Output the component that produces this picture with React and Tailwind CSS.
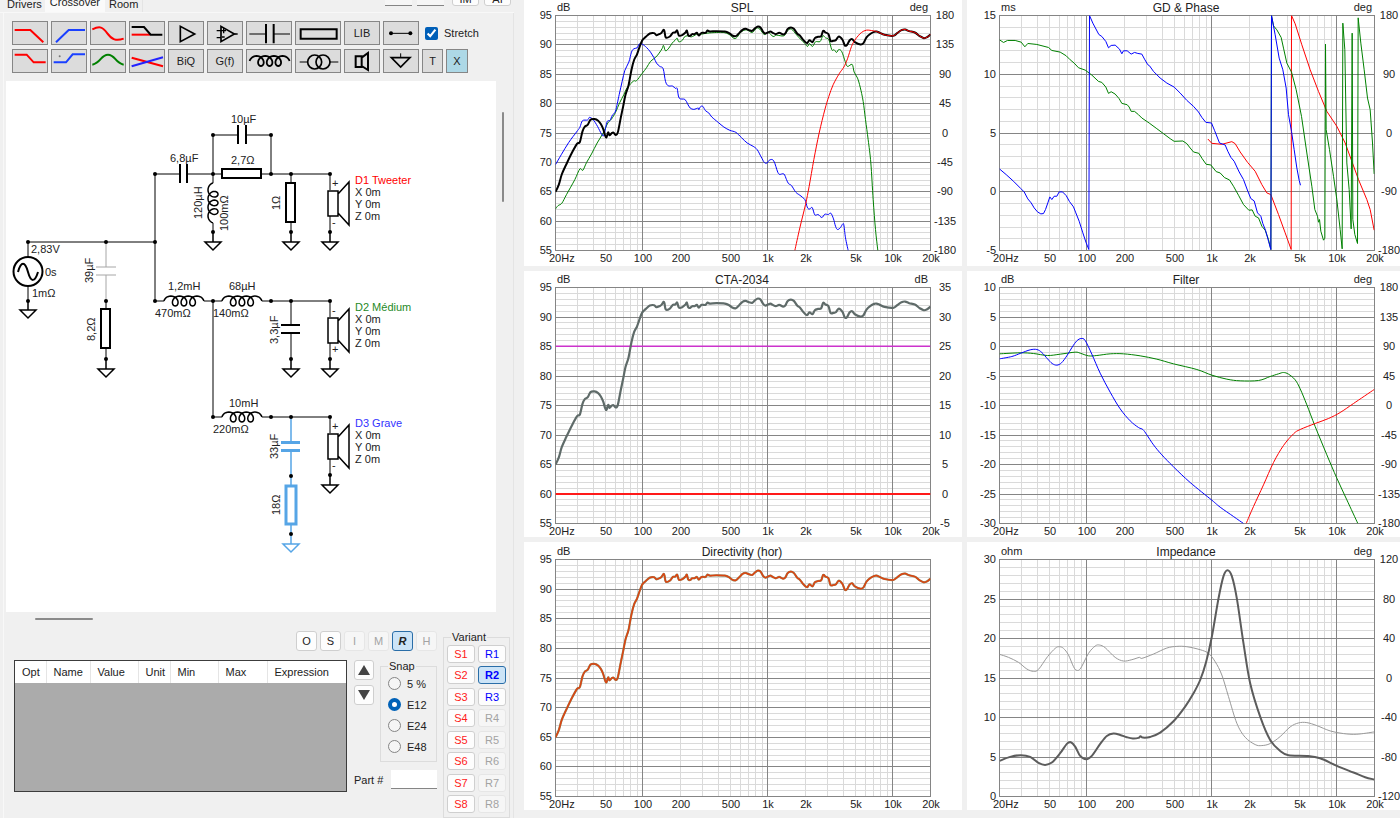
import clsx from 'clsx';

const RED = '#ff0000';
const BLUE = '#0000ff';
const GREEN = '#008000';
const SELECTED = '#56a5e6';

// ---------- curves ----------

const SUM = [
  107,577, 117,555, 126,524, 140,493, 157,458, 172,432, 180,427, 188,395, 195,381, 204,375, 212,360, 224,358,
  235,363, 243,373, 250,388, 256,408, 260,413, 265,398, 269,407, 275,401, 281,399, 288,406, 294,398, 303,353,
  310,320, 317,285, 326,257, 335,210, 343,180, 351,165, 358,145, 367,122, 378,111, 390,101, 403,100, 410,106,
  420,102, 425,99, 431,90, 434,95, 438,113, 450,110, 459,99, 466,98, 472,92, 477,107, 487,106, 497,98,
  501,92, 505,106, 511,108, 517,103, 524,103, 531,99, 537,107, 545,99, 557,99, 563,92, 570,95, 590,94,
  615,95, 628,100, 637,107, 648,109, 658,100, 668,90, 677,87, 688,91, 697,93, 706,85, 714,80, 722,83,
  730,96, 737,101, 744,98, 752,95, 759,99, 768,103, 778,99, 790,104, 797,100, 803,88, 813,83, 822,87,
  832,101, 840,107, 850,120, 858,128, 863,129, 869,121, 878,127, 885,115, 895,111, 904,109, 910,93, 917,98,
  926,103, 932,123, 941,123, 948,121, 957,110, 968,120, 975,137, 982,135, 989,122, 997,118, 1005,127,
  1022,134, 1031,130, 1040,113, 1052,102, 1063,96, 1070,95, 1080,99, 1094,105, 1120,108, 1132,100,
  1145,91, 1156,89, 1168,94, 1185,98, 1200,109, 1212,115, 1222,112, 1232,104,
];

const SPL_WOOFER = [
  107,495, 125,464, 147,428, 170,397, 180,383, 188,363, 203,361, 209,353, 220,360, 233,380, 245,403, 252,407,
  262,366, 270,363, 278,346, 287,334, 298,285, 307,245, 315,212, 327,187, 335,157, 342,147, 352,144, 358,133,
  367,133, 380,143, 392,157, 402,173, 410,190, 420,200, 430,207, 437,245, 445,258, 458,259, 467,266, 472,266,
  478,295, 495,299, 503,312, 511,325, 522,329, 535,325, 537,330, 542,321, 549,320, 557,333, 567,340, 576,352,
  595,368, 612,382, 630,392, 648,398, 665,414, 682,430, 700,440, 712,450, 724,472, 734,489, 742,490, 748,482,
  758,480, 765,491, 771,510, 778,524, 792,523, 800,540, 806,552, 815,558, 828,578, 840,587, 855,600, 862,622,
  868,629, 877,624, 885,646, 895,645, 906,654, 915,644, 925,645, 933,641, 941,658, 947,680, 953,690, 962,684,
  968,674, 972,676, 977,715, 985,753,
];

const SPL_MID = [
  107,628, 115,618, 126,611, 140,585, 165,540, 180,508, 189,512, 200,489, 215,463, 232,430, 250,400, 264,370,
  275,358, 287,338, 300,308, 312,285, 322,264, 341,244, 350,243, 367,221, 380,204, 392,185, 408,172, 418,160,
  427,146, 431,137, 437,153, 447,145, 457,130, 467,120, 472,115, 477,126, 488,121, 494,111, 503,108, 515,111,
  530,104, 545,103, 562,100, 590,98, 612,98, 628,104, 643,116, 652,112, 663,97, 680,90, 697,98, 710,85,
  720,88, 733,104, 745,98, 760,110, 770,106, 792,108, 803,93, 815,88, 830,105, 843,119, 855,131, 863,140,
  869,131, 878,140, 887,126, 901,125, 909,108, 917,114, 927,120, 936,150, 943,150, 950,158, 957,149, 966,156,
  976,185, 983,200, 997,194, 1003,217, 1013,235, 1021,262, 1030,305, 1037,360, 1045,420, 1053,490, 1060,600,
  1067,690, 1074,753,
];

const SPL_TWEETER = [
  825,753, 840,685, 857,615, 868,560, 882,480, 898,400, 915,330, 927,290, 940,255, 958,222, 972,202, 983,177,
  995,140, 1005,121, 1015,108, 1025,98, 1040,91, 1060,93, 1070,95, 1080,99, 1094,105, 1120,108, 1132,100,
  1145,91, 1156,89, 1168,94, 1185,98, 1200,109, 1212,115, 1222,112, 1232,104,
];

const PHASE_WOOFER = [
  118,508, 138,525, 160,545, 182,567, 192,577, 203,598, 213,610, 222,625, 232,637, 242,643, 250,642, 256,630,
  263,610, 269,592, 275,600, 282,590, 290,590, 297,577, 307,577, 318,588, 328,606, 340,622, 347,640, 357,665,
  368,700, 378,730, 386,750, 388,47, 398,70, 416,104, 425,110, 437,125, 445,144, 453,137, 465,136, 478,148,
  485,162, 490,153, 501,153, 513,163, 523,158, 533,161, 545,163, 553,178, 563,195, 568,198, 580,215, 600,235,
  620,250, 642,262, 660,280, 680,302, 700,320, 715,337, 725,353, 737,368, 754,370, 763,392, 778,430, 795,436,
  803,455, 812,473, 822,485, 837,517, 850,540, 863,575, 872,597, 882,604, 892,640, 902,650, 908,672, 916,692,
  925,725, 932,750, 934,47, 945,105, 957,175, 968,210, 978,265, 985,345, 994,395, 1002,450, 1010,505,
  1017,542, 1021,557,
];

const PHASE_MID = [
  118,120, 130,128, 142,122, 165,122, 183,127, 194,141, 203,131, 230,134, 265,143, 275,152, 300,157, 318,168,
  330,180, 342,190, 355,204, 375,211, 395,226, 415,245, 425,248, 437,262, 445,281, 453,276, 465,283, 477,297,
  485,311, 501,315, 507,322, 513,335, 523,335, 535,345, 545,355, 567,370, 590,387, 610,402, 630,417, 642,425,
  668,424, 680,432, 690,445, 700,457, 716,461, 726,477, 738,494, 752,496, 768,516, 780,520, 793,534, 808,541,
  820,560, 835,587, 850,615, 866,632, 876,631, 885,650, 895,655, 905,680, 915,692, 925,720, 932,750, 934,47,
  940,78, 950,90, 963,113, 970,145, 980,190, 994,217, 1008,270, 1024,350, 1040,460, 1055,560, 1064,630,
  1072,650, 1075,668, 1078,660, 1082,695, 1090,722, 1094,716, 1096,133, 1098,390, 1108,450, 1120,530,
  1130,600, 1140,690, 1146,748, 1148,70, 1154,150, 1160,490, 1167,570, 1173,688, 1176,100, 1178,660,
  1184,705, 1192,732, 1194,54, 1202,130, 1212,210, 1222,295, 1230,330, 1237,430, 1242,523,
];

const PHASE_TWEETER = [
  743,418, 755,431, 785,434, 815,426, 825,432, 840,457, 862,488, 885,515, 905,555, 920,580, 932,585, 955,645,
  975,700, 993,750, 994,47, 1005,72, 1025,135, 1050,210, 1075,275, 1100,335, 1130,380, 1155,430, 1175,485,
  1195,540, 1220,600, 1230,630, 1242,692,
];

const FILTER_WOOFER = [
  118,272, 155,265, 182,255, 210,245, 230,244, 245,253, 262,272, 276,286, 290,291, 304,284, 320,263, 336,237,
  350,218, 363,211, 375,217, 395,258, 420,315, 450,372, 480,422, 510,458, 535,478, 548,484, 560,500, 580,530,
  605,560, 640,596, 690,643, 755,696, 780,717, 820,745, 850,766,
];
const FILTER_MID = [
  118,257, 180,254, 220,256, 262,262, 300,258, 345,252, 360,255, 385,263, 410,262, 450,257, 490,257, 540,263,
  590,273, 640,287, 710,304, 755,321, 800,333, 840,338, 895,337, 930,325, 955,317, 970,313, 985,318, 1005,335,
  1020,362, 1040,410, 1065,475, 1100,560, 1130,630, 1160,695, 1193,766,
];
const FILTER_TWEETER = [
  858,766, 880,715, 910,650, 940,583, 970,532, 1000,497, 1020,484, 1065,466, 1105,451, 1140,433, 1180,406,
  1242,364,
];

const IMP_MAG = [
  118,663, 150,651, 182,646, 210,651, 235,669, 255,675, 275,668, 300,640, 320,612, 332,607, 345,620, 360,648,
  378,658, 395,648, 420,612, 440,588, 460,581, 480,585, 500,592, 518,596, 535,594, 541,589, 548,593, 570,591,
  600,578, 640,544, 675,500, 700,460, 720,420, 738,365, 755,290, 775,175, 790,108, 802,90, 815,108, 830,175,
  850,310, 870,430, 900,530, 930,600, 960,633, 985,646, 1040,648, 1080,655, 1130,678, 1180,698, 1215,712,
  1242,719,
];
const IMP_PHASE = [
  118,343, 145,352, 175,367, 200,387, 220,394, 235,388, 262,350, 285,325, 297,320, 310,325, 325,345, 340,380,
  350,391, 362,384, 385,340, 405,318, 418,315, 435,323, 465,352, 490,363, 515,359, 538,352, 545,355, 580,342,
  620,324, 650,319, 680,320, 720,329, 745,340, 765,365, 785,405, 805,470, 830,550, 855,592, 885,614, 905,617,
  930,611, 960,590, 990,561, 1015,549, 1040,548, 1070,557, 1110,573, 1150,581, 1190,583, 1242,576,
];

function toPoints(flat) {
  const pts = [];
  for (let i = 0; i < flat.length; i += 2) pts.push([flat[i], flat[i + 1]]);
  return pts;
}

function linePath(flat) {
  return 'M' + toPoints(flat).map(p => p.join(' ')).join('L');
}

// Catmull-Rom through all points
function smoothPath(flat) {
  const p = toPoints(flat);
  let d = `M${p[0][0]} ${p[0][1]}`;
  for (let i = 0; i < p.length - 1; i++) {
    const a = p[i - 1] || p[i];
    const b = p[i];
    const c = p[i + 1];
    const e = p[i + 2] || c;
    d += `C${b[0] + (c[0] - a[0]) / 6} ${b[1] + (c[1] - a[1]) / 6} ${c[0] - (e[0] - b[0]) / 6} ${c[1] - (e[1] - b[1]) / 6} ${c[0]} ${c[1]}`;
  }
  return d;
}

// ---------- charts ----------

const PLOT_W = 375;
const FREQ_LABELS = [
  [50, '50'], [100, '100'], [200, '200'], [500, '500'], [1000, '1k'],
  [2000, '2k'], [5000, '5k'], [10000, '10k'], [20000, '20k'],
];
const FREQ_LINES = [];
for (let decade = 10; decade <= 10000; decade *= 10) {
  for (let n = 1; n < 10; n++) {
    const f = n * decade;
    if (f > 20 && f < 20000) FREQ_LINES.push(f);
  }
}

function range(from, to, step) {
  const out = [];
  for (let v = from; step > 0 ? v <= to : v >= to; v += step) out.push(v);
  return out;
}

const DB_AXIS = range(95, 55, -5);
const DEG_AXIS = range(180, -180, -45);

const CHARTS = [
  {
    title: 'SPL', width: 438, height: 266, x0: 31, top: 15, bottom: 250,
    left: 'dB', right: 'deg', leftTicks: DB_AXIS, rightTicks: DEG_AXIS, box: '107 47 1125 706',
    series: [
      { d: smoothPath(SPL_MID), color: GREEN, w: 1 },
      { d: smoothPath(SPL_WOOFER), color: BLUE, w: 1 },
      { d: smoothPath(SUM), color: '#000000', w: 2 },
      { d: smoothPath(SPL_TWEETER), color: RED, w: 1 },
    ],
  },
  {
    title: 'GD & Phase', width: 433, height: 266, x0: 32, top: 15, bottom: 250,
    left: 'ms', right: 'deg', leftTicks: range(15, -5, -5), rightTicks: range(180, -180, -90), box: '118 47 1125 706',
    series: [
      { d: linePath(PHASE_TWEETER), color: RED, w: 1 },
      { d: linePath(PHASE_MID), color: GREEN, w: 1 },
      { d: linePath(PHASE_WOOFER), color: BLUE, w: 1 },
    ],
  },
  {
    title: 'CTA-2034', width: 438, height: 266, x0: 31, top: 16, bottom: 252,
    left: 'dB', right: 'dB', leftTicks: DB_AXIS, rightTicks: range(35, -5, -5), box: '107 47 1125 706',
    series: [
      { d: 'M107 223H1232', color: '#cc33cc', w: 1.5 },
      { d: 'M107 665H1232', color: '#ff1a1a', w: 2 },
      { d: smoothPath(SUM), color: '#5f6b69', w: 2.2 },
    ],
  },
  {
    title: 'Filter', width: 433, height: 266, x0: 32, top: 16, bottom: 252,
    left: 'dB', right: 'deg', leftTicks: range(10, -30, -5), rightTicks: DEG_AXIS, box: '118 58 1125 708',
    series: [
      { d: smoothPath(FILTER_MID), color: GREEN, w: 1 },
      { d: smoothPath(FILTER_WOOFER), color: BLUE, w: 1 },
      { d: smoothPath(FILTER_TWEETER), color: RED, w: 1 },
    ],
  },
  {
    title: 'Directivity (hor)', width: 438, height: 268, x0: 31, top: 17, bottom: 254,
    left: 'dB', right: '', leftTicks: DB_AXIS, rightTicks: [], box: '107 47 1125 706',
    series: [
      { d: smoothPath(SUM), color: '#8d8a60', w: 2.2 },
      { d: smoothPath(SUM), color: '#dd4412', w: 1.5 },
    ],
  },
  {
    title: 'Impedance', width: 433, height: 268, x0: 32, top: 17, bottom: 254,
    left: 'ohm', right: 'deg', leftTicks: range(30, 0, -5), rightTicks: range(120, -120, -40), box: '118 58 1125 712',
    series: [
      { d: smoothPath(IMP_PHASE), color: '#999999', w: 1 },
      { d: smoothPath(IMP_MAG), color: '#5c5c5c', w: 2 },
    ],
  },
];

function Chart({ chart }) {
  const { title, width, height, x0, top, bottom, left, right, leftTicks, rightTicks, box, series } = chart;
  const plotH = bottom - top;
  const fx = f => x0 + Math.round((PLOT_W * Math.log10(f / 20)) / 3);
  const rowY = (i, n) => top + Math.round((plotH * i) / n);
  const majors = leftTicks.length - 1;
  const minors = majors * 5;

  return (
    <svg viewBox={`0 0 ${width} ${height}`} className="block h-auto w-full bg-white" role="img" aria-label={title}>
      <g stroke="#dadada" shapeRendering="crispEdges">
        {FREQ_LINES.map(f => <line key={f} x1={fx(f) + 0.5} x2={fx(f) + 0.5} y1={top} y2={bottom} />)}
        {range(1, minors - 1, 1).map(i => (
          <line key={i} x1={x0} x2={x0 + PLOT_W} y1={rowY(i, minors) + 0.5} y2={rowY(i, minors) + 0.5} />
        ))}
      </g>
      <g stroke="#858585" shapeRendering="crispEdges">
        {[100, 1000, 10000].map(f => <line key={f} x1={fx(f) + 0.5} x2={fx(f) + 0.5} y1={top} y2={bottom} />)}
        {range(1, majors - 1, 1).map(i => (
          <line key={i} x1={x0} x2={x0 + PLOT_W} y1={rowY(i, majors) + 0.5} y2={rowY(i, majors) + 0.5} />
        ))}
        <rect x={x0 + 0.5} y={top + 0.5} width={PLOT_W} height={plotH} fill="none" />
      </g>

      <svg x={x0 + 0.5} y={top + 0.5} width={PLOT_W} height={plotH} viewBox={box} preserveAspectRatio="none">
        {series.map((s, i) => (
          <path key={i} d={s.d} fill="none" stroke={s.color} strokeWidth={s.w} strokeLinejoin="round" vectorEffect="non-scaling-stroke" />
        ))}
      </svg>

      <g className="text-[11px]" fill="#222222">
        <text x={x0 + 2} y={top - 4}>{left}</text>
        {right && <text x={x0 + 373} y={top - 4} textAnchor="end">{right}</text>}
        {leftTicks.map((v, i) => (
          <text key={v} x={x0 - 3} y={rowY(i, majors) + 4} textAnchor="end">{v}</text>
        ))}
        {rightTicks.map((v, i) => (
          <text key={v} x={x0 + PLOT_W + 15} y={rowY(i, rightTicks.length - 1) + 4} textAnchor="middle">{v}</text>
        ))}
        <text x={x0 - 6} y={bottom + 12}>20Hz</text>
        {FREQ_LABELS.map(([f, label]) => (
          <text key={f} x={fx(f) + 1} y={bottom + 12} textAnchor="middle">{label}</text>
        ))}
      </g>
      <text x={x0 + 187} y={top - 3} textAnchor="middle" fill="#222222" className="text-[12px]">
        {title}
      </text>
    </svg>
  );
}

// ---------- schematic ----------

// 40 wide coil with three loops, drawn from (0,0)
function coilPath() {
  const pts = [];
  for (let i = 0; i <= 84; i++) {
    const a = -Math.PI / 2 + (i / 84) * 7 * Math.PI;
    pts.push(`${(6.9 + 1.38 * a + 4.8 * Math.sin(a)).toFixed(2)} ${(-5 * Math.cos(a)).toFixed(2)}`);
  }
  return 'M' + pts.join('L');
}
const COIL = coilPath();

const Dot = ({ x, y }) => <circle cx={x} cy={y} r="2" fill="#000000" stroke="none" />;

const Ground = ({ x, y, color = '#000000' }) => (
  <path d={`M${x} ${y - 10}V${y}M${x - 8} ${y}H${x + 8}L${x} ${y + 8}Z`} stroke={color} strokeWidth="1.5" />
);

const Label = ({ x, y, children, up }) => (
  <text x={x} y={y} transform={up ? `rotate(-90 ${x} ${y})` : undefined} fill="#222222" stroke="none">{children}</text>
);

function Driver({ y, name, color, inverted }) {
  return (
    <g>
      <path d={`M330 ${y}V${y + 16}M330 ${y + 42}V${y + 58}`} />
      <path d={`M328 ${y + 17}H338V${y + 42}H328ZM338 ${y + 20}L349 ${y + 8}V${y + 51}L338 ${y + 39}`} strokeWidth="1.5" />
      <Label x={332} y={y + 13}>{inverted ? '-' : '+'}</Label>
      <Label x={332} y={y + 52}>{inverted ? '+' : '-'}</Label>
      <Dot x={330} y={y} />
      <Dot x={330} y={y + 58} />
      <Ground x={330} y={y + 68} />
      <text x="355" y={y + 10} fill={color} stroke="none">{name}</text>
      {['X', 'Y', 'Z'].map((axis, i) => (
        <Label key={axis} x={355} y={y + 22 + i * 12}>{axis} 0m</Label>
      ))}
    </g>
  );
}

const DOTS = [
  [28, 242], [106, 242], [155, 242], [28, 301], [106, 301], [106, 359], [155, 174], [155, 301], [213, 174],
  [213, 135], [271, 135], [271, 174], [291, 174], [213, 232], [291, 232], [213, 301], [271, 301], [291, 301],
  [291, 359], [213, 417], [271, 417], [291, 417], [291, 476], [291, 534],
];

function Schematic() {
  return (
    <svg
      width="490" height="531" viewBox="6 81 490 531" fill="none" stroke="#000000"
      className="block text-[11px]" role="img" aria-label="Crossover schematic"
    >
      {/* wires */}
      <path d="M28 242H155M28 242V257M28 286V301M155 174V301M155 174H179M188 174H222M213 183V135H237M246 135H271V174M262 174H330M291 174V183M291 223V232M213 223V232M155 301H164M204 301H222M262 301H330M213 301V417H222M262 417H330M291 301V325M291 333V359M106 301V309M106 349V359" />

      {/* source */}
      <circle cx="28" cy="271.500" r="14.500" strokeWidth="2" />
      <path d="M18 272C21 261 25 261 28 272S35 282 38 272" strokeWidth="2" />
      <Ground x={28} y={310} />
      <Label x={31} y={253}>2,83V</Label>
      <Label x={45} y={276}>0s</Label>
      <Label x={32} y={297}>1mΩ</Label>

      {/* muted branch */}
      <path d="M106 242V267M106 275V301M96 267H116M96 275H116" stroke="#a6a6a6" />
      <path d="M101 309H110V348H101Z" strokeWidth="2" />
      <Ground x={106} y={369} />
      <Label up x={93} y={283}>39µF</Label>
      <Label up x={95} y={341}>8,2Ω</Label>

      {/* tweeter */}
      <path d="M180 164V183M187 164V183M238 125V144M246 125V144" strokeWidth="2" />
      <path d="M222 169H261V178H222ZM286 183H295V222H286Z" strokeWidth="2" />
      <path d={COIL} transform="translate(213 183) rotate(90) scale(1 -1)" strokeWidth="1.5" />
      <Ground x={213} y={242} />
      <Ground x={291} y={242} />
      <Label x={170} y={162}>6,8µF</Label>
      <Label x={231} y={123}>10µF</Label>
      <Label x={231} y={164}>2,7Ω</Label>
      <Label up x={202} y={219}>120µH</Label>
      <Label up x={228} y={231}>100mΩ</Label>
      <Label up x={280} y={210}>1Ω</Label>
      <Driver y={174} name="D1 Tweeter" color={RED} />

      {/* mid */}
      <path d={COIL} transform="translate(164 301)" strokeWidth="1.5" />
      <path d={COIL} transform="translate(222 301)" strokeWidth="1.5" />
      <path d="M281 325H300M281 333H300" strokeWidth="2" />
      <Ground x={291} y={369} />
      <Label x={168} y={290}>1,2mH</Label>
      <Label x={155} y={317}>470mΩ</Label>
      <Label x={229} y={290}>68µH</Label>
      <Label x={213} y={317}>140mΩ</Label>
      <Label up x={278} y={344}>3,3µF</Label>
      <Driver y={301} name="D2 Médium" color="#1f8a1f" inverted />

      {/* woofer, selected branch in light blue */}
      <path d={COIL} transform="translate(222 417)" strokeWidth="1.5" />
      <g stroke={SELECTED}>
        <path d="M291 417V442M291 451V485M291 525V534" strokeWidth="1.500" />
        <path d="M281 442.500H300M281 450.500H300M286 486H296V524H286Z" strokeWidth="3" />
      </g>
      <Ground x={291} y={544} color={SELECTED} />
      <Label x={229} y={407}>10mH</Label>
      <Label x={213} y={433}>220mΩ</Label>
      <Label up x={278} y={459}>33µF</Label>
      <Label up x={280} y={515}>18Ω</Label>
      <Driver y={417} name="D3 Grave" color="#3333ff" />

      {DOTS.map(([x, y]) => <Dot key={`${x}-${y}`} x={x} y={y} />)}
    </svg>
  );
}

// ---------- toolbar ----------

const WIDE = 'w-[46px]';
const NORMAL = 'w-9';

const TOOLS_TOP = [
  { name: 'Low pass', size: NORMAL, box: '39 67 102 66', icon: <path d="M44 91H91L130 128" stroke={RED} strokeWidth="6" /> },
  { name: 'High pass', size: NORMAL, box: '156 67 102 66', icon: <path d="M168 128L206 91H255" stroke="#1a40ff" strokeWidth="6" /> },
  { name: 'All pass', size: NORMAL, box: '273 67 102 66', icon: <path d="M277 89C300 78 308 82 322 101S348 125 371 117" stroke={RED} strokeWidth="6" /> },
  {
    name: 'Shelf', size: NORMAL, box: '390 67 102 66',
    icon: (
      <>
        <path d="M395 105H450" stroke={RED} strokeWidth="6" />
        <path d="M395 82H432L452 105H487" strokeWidth="6" />
      </>
    ),
  },
  { name: 'Amplifier', size: NORMAL, box: '507 67 102 66', icon: <path d="M541 80V126L584 103Z" strokeWidth="5" /> },
  {
    name: 'Op amp', size: NORMAL, box: '624 67 102 66',
    icon: (
      <>
        <path d="M663 80V126L703 103Z" strokeWidth="5" />
        <path d="M650 93H678M650 114H663M671 85V101M666 112H674M703 103H713" strokeWidth="4" />
      </>
    ),
  },
  {
    name: 'Capacitor', size: WIDE, box: '741 67 132 66',
    icon: (
      <>
        <path d="M748 103H797M822 103H870" strokeWidth="3" />
        <path d="M798 73V131M821 73V131" strokeWidth="6" />
      </>
    ),
  },
  { name: 'Resistor', size: WIDE, box: '889 67 132 66', icon: <path d="M903 89H1011V117H903Z" strokeWidth="6" /> },
  { name: 'LIB', size: NORMAL, text: 'LIB' },
  {
    name: 'Wire', size: NORMAL, box: '1156 67 102 66',
    icon: (
      <>
        <path d="M1176 101H1235" strokeWidth="3" />
        <circle cx="1177" cy="101" r="6" fill="#000000" stroke="none" />
        <circle cx="1235" cy="101" r="6" fill="#000000" stroke="none" />
      </>
    ),
  },
];

const TOOLS_BOTTOM = [
  { name: 'Low shelf', size: NORMAL, box: '39 150 102 66', icon: <path d="M44 164H80L101 187H137" stroke={RED} strokeWidth="6" /> },
  {
    name: 'High shelf', size: NORMAL, box: '156 150 102 66',
    icon: (
      <>
        <path d="M161 187H198L218 163H255" stroke="#1a40ff" strokeWidth="6" />
        <circle cx="179" cy="169" r="3" fill="#777777" stroke="none" />
      </>
    ),
  },
  { name: 'Peak', size: NORMAL, box: '273 150 102 66', icon: <path d="M277 194C304 188 302 164 324 164S344 188 371 194" stroke={GREEN} strokeWidth="6" /> },
  {
    name: 'Crossing', size: NORMAL, box: '390 150 102 66',
    icon: (
      <>
        <path d="M395 173L489 199" stroke={RED} strokeWidth="6" />
        <path d="M395 199L489 172" stroke="#2222ff" strokeWidth="6" />
      </>
    ),
  },
  { name: 'BiQ', size: NORMAL, text: 'BiQ' },
  { name: 'G(f)', size: NORMAL, text: 'G(f)' },
  { name: 'Inductor', size: WIDE, box: '741 150 132 66', icon: <path d={COIL} transform="translate(749 183) scale(3)" strokeWidth="1.800" /> },
  {
    name: 'Transformer', size: WIDE, box: '889 150 132 66',
    icon: (
      <>
        <circle cx="945" cy="186" r="21" strokeWidth="5" />
        <circle cx="970" cy="186" r="21" strokeWidth="5" />
        <path d="M900 186H924M991 186H1016" strokeWidth="3" />
      </>
    ),
  },
  { name: 'Driver', size: NORMAL, box: '1038 150 102 66', icon: <path d="M1070 169H1088V201H1070ZM1088 173L1107 159V210L1088 198" strokeWidth="6" /> },
  {
    name: 'Ground', size: NORMAL, box: '1156 150 102 66',
    icon: (
      <>
        <path d="M1206 160V172" strokeWidth="3" />
        <path d="M1178 173H1234L1206 201Z" strokeWidth="5" />
      </>
    ),
  },
  { name: 'Text', size: 'w-[21px]', text: 'T' },
  { name: 'Delete', size: 'w-[22px]', text: 'X', active: true },
];

function ToolButton({ tool }) {
  return (
    <button
      type="button"
      aria-label={tool.name}
      className={clsx(
        'flex h-6 items-center justify-center border border-[#868686]',
        tool.size,
        tool.active ? 'bg-[#add8e6]' : 'bg-[#dcdcdc]',
      )}
    >
      {tool.text || (
        <svg viewBox={tool.box} className="h-full w-full" fill="none" stroke="#000000">{tool.icon}</svg>
      )}
    </button>
  );
}

// ---------- bottom controls ----------

const MODES = [
  { label: 'O' }, { label: 'S' }, { label: 'I', off: true }, { label: 'M', off: true },
  { label: 'R', on: true }, { label: 'H', off: true },
];

const COLUMNS = [
  ['Opt', 'w-[31px]'], ['Name', 'w-[44px]'], ['Value', 'w-[48px]'], ['Unit', 'w-[32px]'],
  ['Min', 'w-[48px]'], ['Max', 'w-[49px]'], ['Expression', ''],
];

const PUSH = 'flex justify-center rounded-[3px] border';
const PUSH_ON = 'border-[#2a6ea8] bg-[#cce4f7] font-bold';
const PUSH_OFF = 'border-[#e6e6e6] bg-[#f6f6f6] text-[#a3a3a3]';
const PUSH_IDLE = 'border-[#cfcfcf] bg-[#fdfdfd]';

function PartsTable() {
  return (
    <div className="h-[132px] flex-1 border border-[#3c3c3c] bg-[#ababab]">
      <table className="w-full table-fixed border-collapse bg-white text-left">
        <thead>
          <tr className="h-[22px]">
            {COLUMNS.map(([name, width]) => (
              <th key={name} scope="col" className={clsx('border-r border-[#e5e5e5] pl-[7px] font-normal last:border-r-0', width)}>{name}</th>
            ))}
          </tr>
        </thead>
      </table>
    </div>
  );
}

function Snap() {
  return (
    <fieldset className="flex flex-1 flex-col border border-[#dcdcdc] px-[7px] pb-1 pt-px">
      <legend className="px-px leading-3">Snap</legend>
      {['5 %', 'E12', 'E24', 'E48'].map(v => (
        <label key={v} className="flex h-[21px] items-center gap-[6px]">
          <input
            type="radio"
            name="snap"
            defaultChecked={v === 'E12'}
            className="h-[13px] w-[13px] appearance-none rounded-full border border-[#858585] bg-[#f6f6f6] checked:border-4 checked:border-[#0062b8] checked:bg-white"
          />
          {v}
        </label>
      ))}
    </fieldset>
  );
}

function Variants() {
  return (
    <fieldset className="w-[67px] border border-[#dcdcdc] px-[3px] pb-1 pt-[2px]">
      <legend className="ml-1 px-px leading-3">Variant</legend>
      <div className="grid h-[168px] grid-cols-2 content-between gap-x-[3px]">
        {range(1, 8, 1).map(n => [
          <button key={`s${n}`} type="button" className={clsx(PUSH, PUSH_IDLE, 'h-[18px] items-center text-[#ff1a1a]')}>S{n}</button>,
          <button
            key={`r${n}`}
            type="button"
            disabled={n > 3}
            className={clsx(PUSH, 'h-[18px] items-center', n === 2 ? PUSH_ON : n > 3 ? PUSH_OFF : PUSH_IDLE, n <= 3 && 'text-[#0000ff]')}
          >
            R{n}
          </button>,
        ])}
      </div>
    </fieldset>
  );
}

export default function App() {
  return (
    <div className="flex min-h-screen bg-[#f0f0f0] text-[11px] leading-4 text-[#222222] [font-family:'Liberation_Sans',Arial,sans-serif]">
      <section className="w-[524px] shrink-0 pr-[10px]">
        {/* tabs, cut by the top of the window */}
        <div className="flex h-[13px] items-end justify-between overflow-hidden border-b border-[#f8f8f8] pl-1">
          <div className="flex items-end" role="tablist">
            <button type="button" role="tab" className="px-[3px]">Drivers</button>
            <button type="button" role="tab" aria-selected="true" className="bg-[#fafafa] px-[5px] pb-[2px]">Crossover</button>
            <button type="button" role="tab" className="border-r border-[#e4e4e4] px-1">Room</button>
          </div>
          <div className="flex items-end gap-[5px] pb-[6px] pr-[3px]">
            <input aria-label="From" className="h-5 w-[27px] border-b border-[#858585] bg-[#f6f6f6]" />
            <input aria-label="To" className="h-5 w-[27px] border-b border-[#858585] bg-[#f6f6f6]" />
            <button type="button" className={clsx(PUSH, PUSH_IDLE, 'ml-[3px] h-5 w-[27px] items-end leading-3')}>IM</button>
            <button type="button" className={clsx(PUSH, PUSH_IDLE, 'h-5 w-[27px] items-end leading-3')}>AI</button>
          </div>
        </div>

        <div className="ml-[3px] border-l border-r border-l-[#f8f8f8] border-r-[#e4e4e4] pl-[2px]">
          <div className="flex flex-col gap-1 px-[6px] pt-2">
            <div className="flex items-center gap-[3px]">
              {TOOLS_TOP.map(t => <ToolButton key={t.name} tool={t} />)}
              <label className="ml-[3px] flex items-center gap-[6px]">
                <input type="checkbox" defaultChecked className="h-[13px] w-[13px] accent-[#005fb8]" />
                Stretch
              </label>
            </div>
            <div className="flex items-center gap-[3px]">
              {TOOLS_BOTTOM.map(t => <ToolButton key={t.name} tool={t} />)}
            </div>
          </div>

          <div className="mt-2 flex">
            <div className="overflow-hidden bg-white">
              <Schematic />
            </div>
            <div className="flex-1 pl-[6px] pt-[31px]">
              <div className="h-[90px] w-[2px] rounded bg-[#8a8a8a]" />
            </div>
          </div>
          <div className="h-[19px] pl-[29px] pt-[6px]">
            <div className="h-[2px] w-[58px] rounded bg-[#8a8a8a]" />
          </div>

          <div className="flex gap-[6px] pl-2 pr-[3px]">
            <div className="flex flex-1 flex-col gap-[9px]">
              <div className="flex justify-end gap-[3px]">
                {MODES.map(m => (
                  <button
                    key={m.label}
                    type="button"
                    disabled={m.off}
                    className={clsx(PUSH, 'h-5 w-[21px] items-center', m.on ? PUSH_ON : m.off ? PUSH_OFF : PUSH_IDLE, m.on && 'italic')}
                  >
                    {m.label}
                  </button>
                ))}
              </div>
              <div className="flex gap-[7px]">
                <PartsTable />
                <div className="flex w-[83px] flex-col gap-2">
                  <div className="flex gap-[6px]">
                    <div className="flex flex-col gap-[5px]">
                      <button type="button" aria-label="Move up" className={clsx(PUSH, PUSH_IDLE, 'h-5 w-5 items-center')}>
                        <svg width="12" height="10" viewBox="0 0 12 10"><path d="M6 0L12 10H0Z" fill="#444444" /></svg>
                      </button>
                      <button type="button" aria-label="Move down" className={clsx(PUSH, PUSH_IDLE, 'h-5 w-5 items-center')}>
                        <svg width="12" height="10" viewBox="0 0 12 10"><path d="M6 10L12 0H0Z" fill="#444444" /></svg>
                      </button>
                    </div>
                    <Snap />
                  </div>
                  <label className="flex items-center justify-between">
                    Part #
                    <input className="h-[19px] w-[46px] border-b border-[#858585] bg-white" />
                  </label>
                </div>
              </div>
            </div>
            <Variants />
          </div>
        </div>
      </section>

      <main className="grid min-w-0 flex-1 grid-cols-[438fr_433fr] content-start gap-[5px]">
        {CHARTS.map(c => <Chart key={c.title} chart={c} />)}
      </main>
    </div>
  );
}
